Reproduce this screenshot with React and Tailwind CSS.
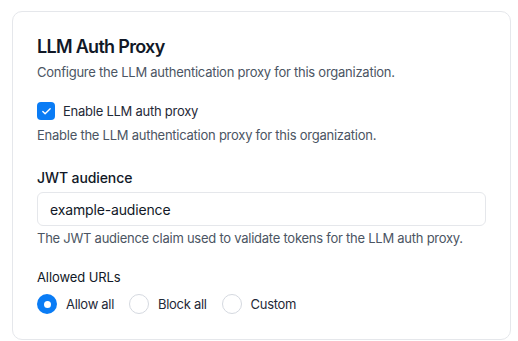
import React from "react";

function Radio({ checked, label }) {
  return (
    <label className="flex items-center gap-[9px]">
      {checked ? (
        <span className="w-5 h-5 rounded-full bg-[#0a7cf5] flex items-center justify-center">
          <span className="w-[7px] h-[7px] rounded-full bg-white" />
        </span>
      ) : (
        <span className="w-5 h-5 rounded-full border border-[#d5d9e0] bg-white" />
      )}
      <span className="text-[13px] tracking-[-0.3px] text-[#1f2937] leading-[18px]">{label}</span>
    </label>
  );
}

export default function App() {
  return (
    <div className="bg-white w-[518px] h-[341px] pt-[11px] pl-[12px] pr-[7px]" style={{ fontFamily: "Inter, 'Noto Sans', sans-serif" }}>
      <div className="border border-[#e5e7eb] rounded-[10px] h-[329px] px-[24px] pt-[23px]">
        <h2 className="text-[18px] font-semibold text-[#111827] leading-[24px] tracking-[-0.7px]">LLM Auth Proxy</h2>
        <p className="text-[13px] text-[#4b5563] mt-[4px] leading-[18px] tracking-[-0.25px]">Configure the LLM authentication proxy for this organization.</p>
        <div className="flex items-center gap-[8px] mt-[21px] h-[18px]">
          <span className="w-[18px] h-[18px] rounded-[4px] bg-[#0a7cf5] flex items-center justify-center">
            <svg width="11" height="11" viewBox="0 0 24 24" fill="none" stroke="white" strokeWidth="3" strokeLinecap="round" strokeLinejoin="round"><path d="M20 6 9 17l-5-5" /></svg>
          </span>
          <span className="text-[13px] text-[#1f2937] leading-[18px] tracking-[-0.25px]">Enable LLM auth proxy</span>
        </div>
        <p className="text-[13px] text-[#4b5563] mt-[6px] leading-[18px] tracking-[-0.25px]">Enable the LLM authentication proxy for this organization.</p>
        <div className="text-[14px] font-medium text-[#111827] mt-[24px] leading-[20px] tracking-[-0.1px]">JWT audience</div>
        <div className="mt-[4px] h-[34px] border border-[#e5e7eb] rounded-[6px] flex items-center px-[12px] text-[14px] text-[#111827] tracking-[-0.15px]">example-audience</div>
        <p className="text-[13px] text-[#4b5563] mt-[3px] leading-[18px] tracking-[-0.25px]">The JWT audience claim used to validate tokens for the LLM auth proxy.</p>
        <div className="text-[13px] text-[#111827] mt-[21px] leading-[18px] tracking-[-0.1px]">Allowed URLs</div>
        <div className="flex items-center gap-[15px] mt-[8px]">
          <Radio checked label="Allow all" />
          <Radio label="Block all" />
          <Radio label="Custom" />
        </div>
      </div>
    </div>
  );
}
